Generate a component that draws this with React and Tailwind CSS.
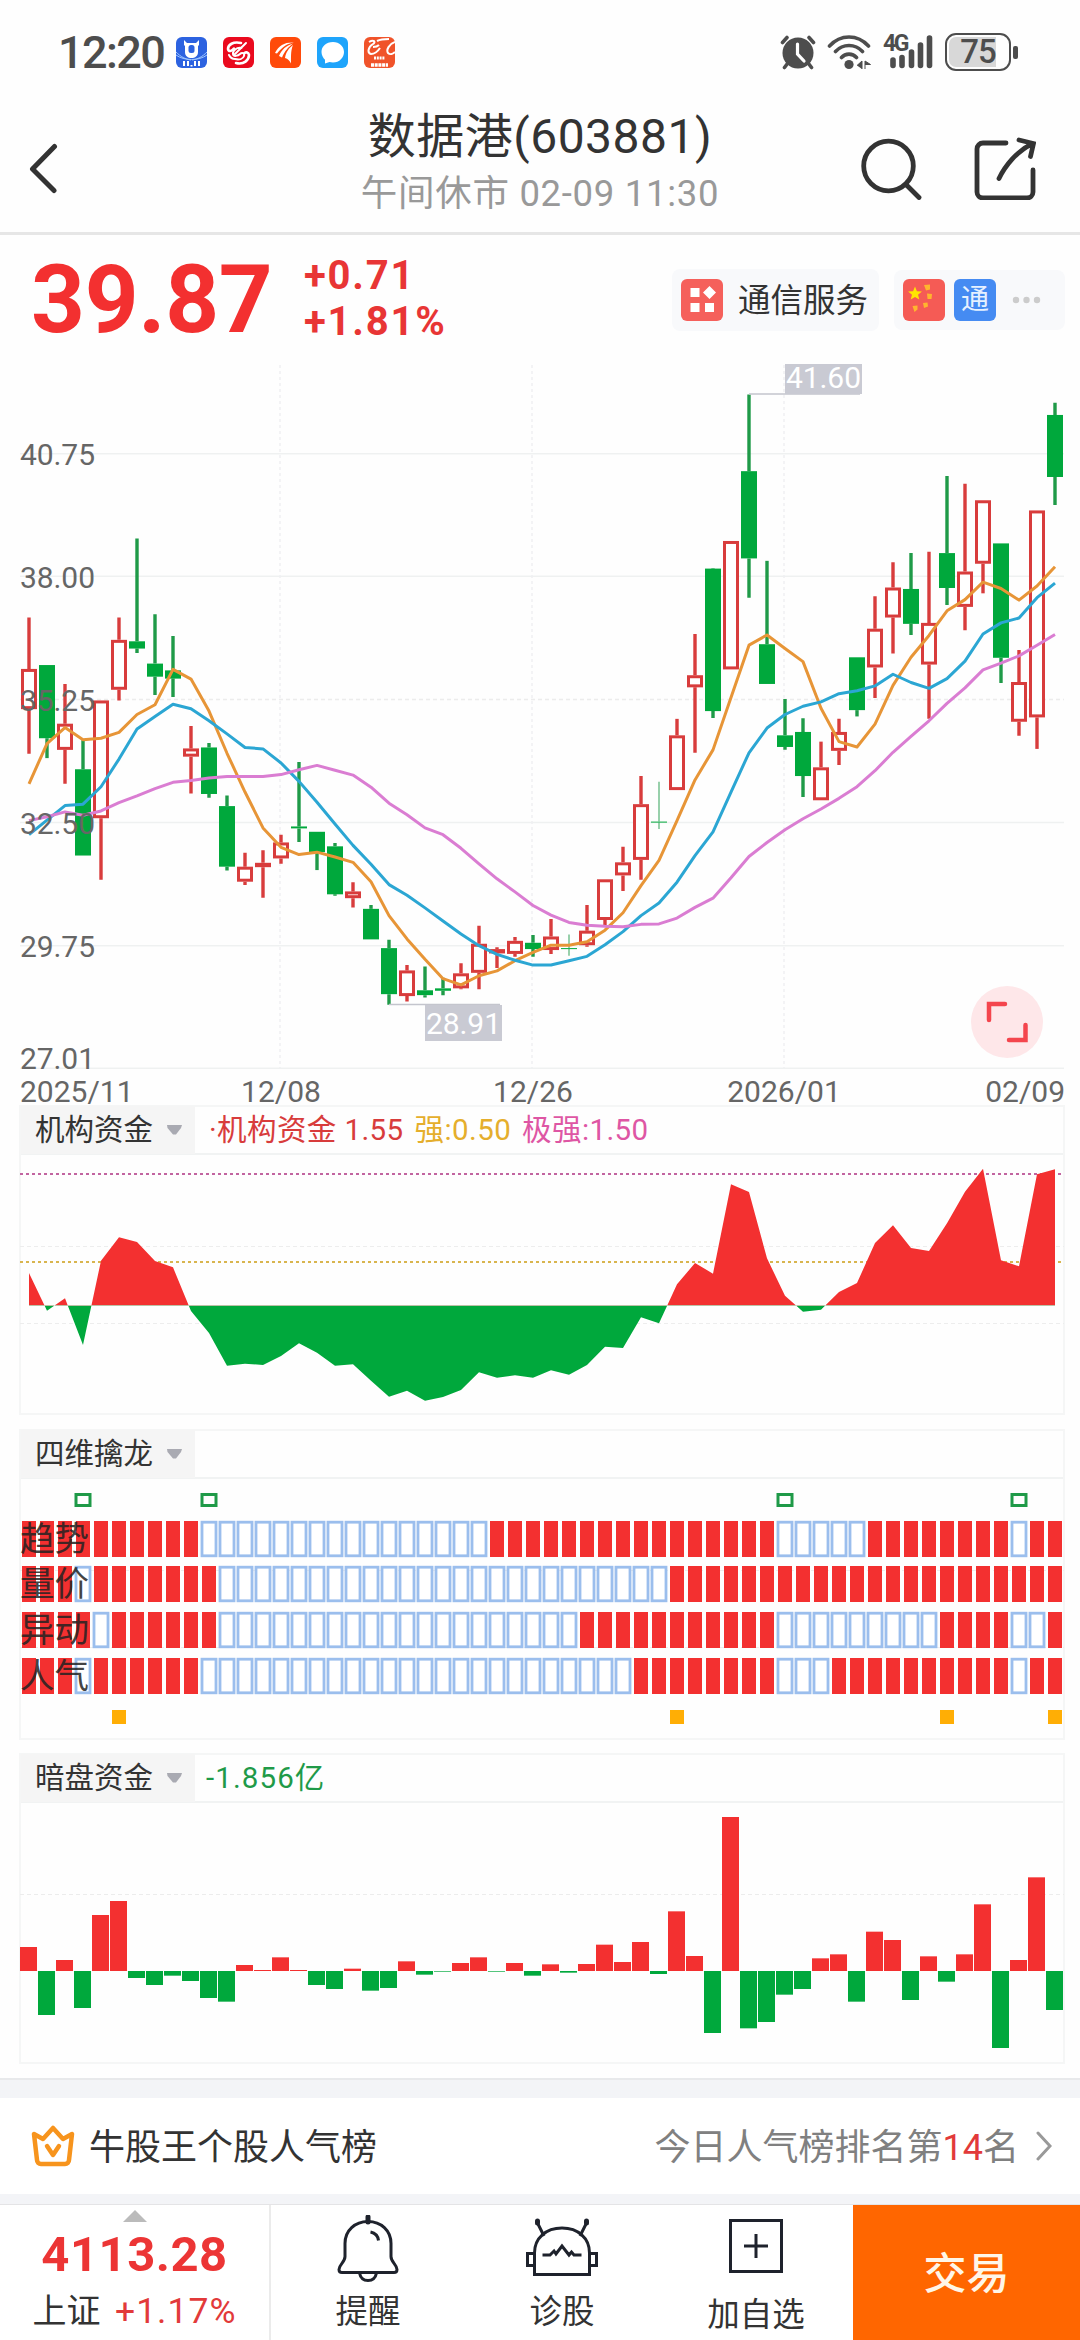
const RED = "#f33030";
const GREEN = "#00a83c";
const COUNT = 58;

// Every chart shares one time axis: a slot is 18px wide and the first is centred on 29
const cx = (i) => 29 + i * 18;

// Price samples sit on a 1568-step scale covering 760px, starting at y=350
const py = (v) => 350 + (v * 760) / 1568;

// [up, high, body top, body bottom, low]
const candles = [
  [1, 552, 658, 741, 833], [0, 650, 650, 801, 842], [1, 689, 771, 825, 895], [0, 805, 865, 1043, 1043],
  [1, 723, 723, 966, 1093], [1, 552, 598, 701, 723], [0, 389, 601, 616, 625], [0, 545, 647, 674, 712],
  [0, 590, 661, 678, 716], [1, 776, 822, 839, 915], [0, 811, 820, 916, 924], [0, 919, 941, 1066, 1074],
  [1, 1037, 1066, 1097, 1104], [1, 1032, 1058, 1067, 1130], [1, 1000, 1016, 1049, 1060], [0, 850, 983, 987, 1015],
  [0, 994, 994, 1036, 1073], [0, 1017, 1024, 1123, 1126], [1, 1098, 1117, 1131, 1150], [0, 1145, 1153, 1216, 1216],
  [0, 1217, 1234, 1329, 1351], [1, 1269, 1280, 1333, 1344], [0, 1272, 1321, 1331, 1336], [0, 1295, 1317, 1322, 1331],
  [1, 1265, 1286, 1317, 1319], [1, 1188, 1225, 1285, 1319], [1, 1232, 1236, 1245, 1275], [1, 1211, 1219, 1246, 1252],
  [0, 1207, 1223, 1236, 1252], [1, 1174, 1210, 1238, 1246], [0, 1206, 1234, 1236, 1250], [1, 1145, 1198, 1228, 1231],
  [1, 1092, 1092, 1176, 1188], [1, 1025, 1057, 1084, 1116], [1, 879, 937, 1052, 1093], [0, 891, 973, 975, 988],
  [1, 761, 795, 908, 908], [1, 586, 671, 696, 831], [0, 450, 451, 745, 759], [1, 394, 394, 659, 659],
  [0, 92, 250, 430, 511], [0, 435, 607, 689, 689], [0, 720, 795, 819, 825], [0, 760, 788, 879, 922],
  [1, 808, 861, 929, 929], [1, 761, 788, 827, 856], [0, 634, 634, 743, 756], [1, 508, 575, 655, 718],
  [1, 438, 490, 552, 626], [0, 419, 493, 565, 588], [1, 416, 563, 649, 761], [0, 260, 419, 491, 526],
  [1, 276, 457, 530, 578], [1, 310, 310, 441, 502], [0, 399, 399, 635, 687], [1, 619, 685, 767, 796],
  [1, 331, 331, 758, 823], [0, 109, 134, 262, 320],
];

const averages = [
  {
    color: "#e79537",
    points: [895, 812, 779, 804, 801, 789, 752, 732, 659, 679, 745, 832, 912, 986, 1026, 1041, 1036, 1046, 1057, 1097, 1167,
      1215, 1257, 1297, 1310, 1291, 1281, 1260, 1243, 1228, 1228, 1221, 1197, 1161, 1105, 1053, 971, 887, 825, 717, 609,
      588, 616, 643, 739, 808, 819, 772, 692, 634, 589, 538, 515, 479, 492, 516, 487, 447],
  },
  {
    color: "#2ba6d3",
    points: [1000, 970, 940, 937, 901, 844, 782, 756, 731, 740, 765, 792, 820, 823, 852, 890, 933, 978, 1022, 1061, 1103,
      1125, 1151, 1178, 1205, 1229, 1247, 1259, 1269, 1269, 1260, 1251, 1227, 1200, 1167, 1141, 1098, 1043, 994, 912, 831,
      780, 752, 735, 726, 709, 703, 693, 669, 686, 698, 678, 642, 586, 563, 553, 511, 481],
  },
  {
    color: "#da7dd2",
    points: [971, 963, 953, 960, 951, 934, 920, 905, 892, 888, 883, 880, 880, 880, 876, 866, 857, 867, 877, 902, 935,
      959, 986, 1000, 1028, 1060, 1091, 1118, 1146, 1166, 1181, 1187, 1189, 1190, 1185, 1184, 1172, 1150, 1131, 1089, 1045,
      1016, 990, 967, 947, 925, 901, 868, 830, 797, 765, 729, 697, 660, 646, 631, 609, 587],
  },
];

const priceLabels = [
  ["40.75", 465], ["38.00", 588], ["35.25", 710.5], ["32.50", 834], ["29.75", 957], ["27.01", 1069],
];

// thirds of a pixel below y=1080, zero line at 676
const funds = [579, 692, 655, 795, 542, 472, 486, 543, 562, 693, 759, 857, 851, 855, 828, 790, 818, 857, 853, 902, 950,
  932, 962, 951, 930, 877, 893, 886, 893, 871, 884, 855, 800, 804, 712, 730, 613, 549, 581, 313, 336, 535, 647, 695,
  689, 636, 609, 489, 436, 504, 513, 430, 335, 266, 541, 559, 283, 268];

// Hollow cell ranges for each signal row, the rest is filled
const signals = [
  { name: "趋势", y: 1521, hollow: [[10, 25], [42, 46], [55, 55]] },
  { name: "量价", y: 1566, hollow: [[3, 3], [11, 35]] },
  { name: "异动", y: 1612, hollow: [[4, 4], [11, 30], [42, 50], [55, 56]] },
  { name: "人气", y: 1658, hollow: [[3, 3], [10, 33], [42, 44], [55, 55]] },
];

const dark = [72, -132, 33, -111, 168, 210, -21, -42, -14, -30, -81, -92, 18, 3, 41, 3, -42, -54, 7, -59, -51, 29, -11,
  -2, 24, 41, -2, 24, -14, 20, -5, 21, 79, 27, 87, -9, 179, 45, -186, 462, -172, -153, -71, -54, 38, 50, -92, 118, 93,
  -87, 44, -32, 50, 200, -231, 33, 281, -117];

function StatusBar() {
  return (
    <div className="h-[104px] flex items-center justify-between pl-[58px] pr-[62px]">
      <div className="flex items-center">
        <span className="w-[118px] text-[45px] font-medium tracking-[-1.600px] leading-none text-[#4d4d4d]">12:20</span>
        <div className="flex gap-4">
          <svg width="31" height="31" viewBox="0 0 31 31">
            <rect width="31" height="31" rx="6" fill="#2c62e0" />
            <path d="M0 18c8 6 23 6 31 0M0 15c5 5 9 7 15 8M31 15c-5 5-9 7-15 8" stroke="#9fc6ff" strokeWidth="1" fill="none" />
            <path d="M8 3l3 3h9l3-3v5l-1 1v6c0 4-3 6-6.500 6S9 19 9 15V9L8 8z" fill="#fff" />
            <rect x="12.500" y="8" width="6" height="8" rx="2.500" fill="#2c62e0" />
            <path d="M8 24v5M12 24v5M19 24v5M23 24v5M15.500 28v1.500" stroke="#fff" strokeWidth="2" />
          </svg>
          <svg width="31" height="31" viewBox="0 0 31 31">
            <rect width="31" height="31" rx="6" fill="#ea0a1e" />
            <path d="M18 6C10 4 5 8 5 12c.5 3 4 2.500 6-.5M13 26C21 28 26 23 26 18c-.5-3-3-3-4.500-2" stroke="#fff" strokeWidth="2.600" fill="none" strokeLinecap="round" />
            <path d="M23 6L12 17M18.500 11c-5-1-9 3-8.500 6s5 2 7 0 5-1 4 2-5 4-9 3c-3 0-5-2-6-4" stroke="#fff" strokeWidth="2" fill="none" strokeLinecap="round" />
          </svg>
          <svg width="31" height="31" viewBox="0 0 31 31">
            <rect width="31" height="31" rx="6" fill="#ff4a0a" />
            <path d="M5 16C9 8 15 5 24 5.500c-7 1-11 4-17 11zM9 19c3-7 7-10 14-12.500-5 4-8 7-11 14zM15 21c1-6 4-10 8-13-2 5-2 9-2 18.500-1.500-3-3-4.500-6-5.500z" fill="#fff" />
          </svg>
          <svg width="31" height="31" viewBox="0 0 31 31">
            <rect width="31" height="31" rx="6" fill="#1ea4fb" />
            <path d="M16 5c6.500 0 11 4.500 11 10s-4.500 10.500-11 10.500c-1.500 0-2.500-.2-3.500-.5L8 26.500v-3.800C6 21 4.500 18 4.500 15 4.500 9.500 9 5 16 5z" fill="#fff" />
          </svg>
          <svg width="31" height="31" viewBox="0 0 31 31">
            <rect width="31" height="31" rx="6" fill="#f0532a" />
            <path d="M5 5c5-3 7 0 4 2-5 3-6 9-2 10 4 0 7-3 9-6M13 4c4-2 8-2 12-2M31 5c-6 2-9 8-7 11 2 2 5 1 7-1M9 10c3 0 5-1 6-2" stroke="#fff" strokeWidth="2" fill="none" />
            <path d="M10 21h11" stroke="#fff" strokeWidth="3" strokeDasharray="2 .8" />
            <path d="M7 28h17" stroke="#fff" strokeWidth="3.500" strokeDasharray="3 .7" />
          </svg>
        </div>
      </div>

      <div className="flex items-center text-[#4d4d4d]">
        <svg width="36" height="36" viewBox="0 0 36 36" className="mr-[11px]" fill="none" stroke="#4d4d4d">
          <circle cx="18" cy="19" r="15.500" fill="#4d4d4d" stroke="none" />
          <path d="M2.500 8.500l4.500-5M33.500 8.500l-4.500-5" strokeWidth="3.600" strokeLinecap="round" />
          <path d="M7.500 29.500l-3 4M28.500 29.500l3 4" strokeWidth="3.600" strokeLinecap="round" />
          <path d="M17.500 10v10l6.500 7" stroke="#fff" strokeWidth="3.200" strokeLinecap="round" />
        </svg>
        <svg width="44" height="36" viewBox="0 0 44 36" className="mr-[12px]" fill="none" stroke="#4d4d4d">
          <path d="M2.500 12C13.500 0 30.500 0 41.500 12M8.500 17.500c7.500-8 19.500-8 27 0M14.500 23.500c4-4.500 11-4.500 15 0" strokeWidth="3.600" strokeLinecap="round" />
          <circle cx="22" cy="30.500" r="4.600" fill="#4d4d4d" stroke="none" />
          <path d="M30 31.500l5-4.500v8M38 35v-8l5.500 3.500H38" fill="#4d4d4d" stroke="#4d4d4d" strokeWidth="1" />
        </svg>
        <div className="relative w-[51px] h-9 mr-[11px]">
          <span className="absolute left-0 -top-[1px] text-[23px] leading-[22px] font-bold tracking-[-2.500px]">4G</span>
          <svg width="51" height="36" viewBox="0 0 51 36" fill="none" stroke="#4d4d4d" strokeWidth="5.600" strokeLinecap="round">
            <path d="M10 26v5.500M19 23.500v8M28.500 18v13.500M37.500 11v20.500M46.500 4v27.500" />
          </svg>
        </div>
        <div className="relative w-[66px] h-[38px] rounded-[11px] border-[2.500px] border-[#4d4d4d] p-[2px]">
          <div className="w-[47px] h-full rounded-l-[7px] bg-[#d8d8d8]" />
          <span className="absolute inset-0 text-center text-[33px] leading-[34px] font-medium tracking-[-1px]">75</span>
        </div>
        <div className="w-[5px] h-[13px] ml-[2px] rounded-[2px] bg-[#4d4d4d]" />
      </div>
    </div>
  );
}

function Header() {
  return (
    <div className="h-[131px] border-b-[3px] border-[#e6e6e6] flex items-center justify-between">
      <div className="w-[220px] pl-[28px]">
        <svg width="32" height="52" viewBox="0 0 32 52" fill="none" stroke="#333" strokeWidth="5" strokeLinecap="round" strokeLinejoin="round">
          <path d="M26.500 4.500L4.500 27l21.500 21.500" />
        </svg>
      </div>
      <div className="h-full pt-[3px] text-center">
        <div className="text-[48px] leading-[60px] tracking-[0.500px] text-[#333]">数据港(603881)</div>
        <div className="text-[36.500px] leading-[54px] tracking-[0.700px] text-[#999]">午间休市 02-09 11:30</div>
      </div>
      <div className="w-[220px] pr-[44px] flex justify-end gap-[50px]">
        <svg width="62" height="64" viewBox="0 0 62 64" fill="none" stroke="#333" strokeWidth="4.800" strokeLinecap="round">
          <circle cx="28.500" cy="30" r="24.800" />
          <path d="M47 49.500l12 12" />
        </svg>
        <svg width="64" height="64" viewBox="0 0 64 64" fill="none" stroke="#333" strokeWidth="4.800" strokeLinecap="round">
          <path d="M34 7H11a6 6 0 0 0-6 6v43a6 6 0 0 0 6 6h44a6 6 0 0 0 6-6V34" />
          <path d="M27 42.500C33 30 45 15 60 8M47 4l14.500 3.500L58.500 20.500" />
        </svg>
      </div>
    </div>
  );
}

function Quote() {
  return (
    <div className="h-[130px] flex items-center pl-[31px] pr-[15px]">
      <div className="w-[273px] text-[94px] leading-none font-bold tracking-[-0.300px] text-[#f33030]">39.87</div>
      <div className="text-[40px] leading-[46px] font-bold tracking-[1.800px] text-[#e83535] -mt-[2px]">
        <div>+0.71</div>
        <div>+1.81%</div>
      </div>
      <div className="ml-auto h-[62px] w-[207px] rounded-lg bg-[#f8f9fb] flex items-center pl-[9px]">
        <svg width="42" height="42" viewBox="0 0 42 42" className="mr-[15px]">
          <rect width="42" height="42" rx="6" fill="#f5605b" />
          <path d="M9.500 9h9v9h-9zM9.500 24h9v9h-9zM24 24h9v9h-9zM28.500 7l6.500 6.500-6.500 6.500-6.500-6.500z" fill="#fff" />
        </svg>
        <span className="pt-[3px] text-[32.500px] text-[#333]">通信服务</span>
      </div>
      <div className="ml-[15px] h-[60px] w-[171px] rounded-lg bg-[#f8f9fb] flex items-center gap-[9px] pl-[9px]">
        <svg width="42" height="42" viewBox="0 0 42 42" fill="#ffe600">
          <rect width="42" height="42" rx="6" fill="#f55b55" />
          <path d="M12 7.500l1.900 4.700 5 .3-3.900 3.200 1.300 4.900-4.300-2.700-4.300 2.700L9 15.700l-3.900-3.200 5-.3z" />
          <g fill="#ffb52e">
            <path d="M21 6l6-.5v5l-4 1zM24 14.500l5 .5-.5 5h-4zM20 24l4.500-.5.500 4-4 1.500zM9.500 27l5-.5v4l-3 2.500z" />
          </g>
        </svg>
        <div className="w-[42px] h-[42px] rounded-md bg-[#458bf2] text-[#e6f1ff] text-[28px] leading-[42px] text-center">通</div>
        <svg width="30" height="8" viewBox="0 0 30 8" fill="#ccc" className="ml-[7px]">
          <circle cx="4" cy="4" r="3.200" />
          <circle cx="14.500" cy="4" r="3.200" />
          <circle cx="25" cy="4" r="3.200" />
        </svg>
      </div>
    </div>
  );
}

function PriceChart() {
  return (
    <svg width="1080" height="740" viewBox="0 365 1080 740" className="block overflow-visible">
      {[453.7, 576.3, 822.6, 945.7, 1068.3].map((y) => (
        <line key={y} x1="20" x2="1064" y1={y} y2={y} stroke="#eff1f1" strokeWidth="1.500" />
      ))}
      <line x1="20" x2="1064" y1="699.500" y2="699.500" stroke="#ececec" strokeWidth="1.500" strokeDasharray="4 3" />
      {[280, 532, 784].map((x) => (
        <line key={x} x1={x} x2={x} y1="365" y2="1068" stroke="#f0f0f2" strokeWidth="1.500" strokeDasharray="3 3" />
      ))}

      {candles.map(([up, high, top, bottom, low], i) => {
        const x = cx(i);
        const color = up ? "#d83c3c" : "#1f9a48";
        const y1 = py(top);
        const h = py(bottom) - y1;
        const thin = i === 30 || i === 35;
        return (
          <g key={i}>
            <path d={`M${x} ${py(high)}V${y1}M${x} ${y1 + h}V${py(low)}`} stroke={color} strokeWidth={thin ? 1.5 : 3.4} opacity={thin ? 0.6 : 1} />
            {up ? (
              <rect x={x - 6.5} y={y1 + 1.5} width="13" height={Math.max(h - 3, 0.6)} fill="#fff" stroke={color} strokeWidth="3" />
            ) : (
              <rect x={x - 8} y={y1} width="16" height={Math.max(h, 1)} fill={GREEN} />
            )}
          </g>
        );
      })}

      {averages.map((a) => (
        <polyline key={a.color} points={a.points.map((v, i) => `${cx(i)},${py(v)}`).join(" ")} fill="none" stroke={a.color} strokeWidth="3" strokeLinejoin="round" />
      ))}

      <path d="M749 394H860M389 1004.500H500" stroke="#c4c5cd" strokeWidth="1.500" />
      <rect x="785" y="364" width="77" height="30" fill="#c9cad3" />
      <rect x="425" y="1005" width="77" height="36" fill="#c9cad3" />
      <g fill="#fff" fontSize="30">
        <text x="786" y="388" textLength="75">41.60</text>
        <text x="426" y="1034" textLength="75">28.91</text>
      </g>

      <g fill="#666" fontSize="30">
        {priceLabels.map(([label, y]) => (
          <text key={label} x="20" y={y} textLength="75">{label}</text>
        ))}
        <text x="20" y="1101.500">2025/11</text>
        <text x="281" y="1101.500" textAnchor="middle">12/08</text>
        <text x="533" y="1101.500" textAnchor="middle">12/26</text>
        <text x="784" y="1101.500" textAnchor="middle">2026/01</text>
        <text x="1065" y="1101.500" textAnchor="end">02/09</text>
      </g>

      <circle cx="1007" cy="1022" r="36" fill="#fee7e9" />
      <path d="M1005 1004H989V1020M1009 1040H1025.500V1025" fill="none" stroke="#f4454d" strokeWidth="4.500" strokeLinecap="round" />
    </svg>
  );
}

function Panel({ title, legend, className, children }) {
  return (
    <section className={`ml-[19px] w-[1046px] border-2 border-[#f5f6f6] ${className}`}>
      <div className="h-[48px] border-b-2 border-[#f1f3f3] flex items-center text-[29.500px]">
        <div className="h-[48px] w-[174px] shrink-0 bg-[#f5f5f5] flex items-center justify-between pl-[14px] pr-[12px] text-[#333]">
          {title}
          <svg width="17" height="10" viewBox="0 0 17 10">
            <path d="M1 0h15l-1 3-5 6.500H7L1.500 3z" fill="#a9aab2" />
          </svg>
        </div>
        {legend}
      </div>
      {children}
    </section>
  );
}

function FundsChart() {
  const base = 1305.4;
  const line = funds.map((v, i) => `L${cx(i)} ${1080 + v / 3}`).join("");
  const area = `M29 ${base}${line}L${cx(COUNT - 1)} ${base}Z`;
  return (
    <svg width="1042" height="258" viewBox="21 1155 1042 258" className="block overflow-visible">
      <clipPath id="above"><rect x="0" y="1150" width="1080" height={base - 1150} /></clipPath>
      <clipPath id="below"><rect x="0" y={base} width="1080" height="120" /></clipPath>
      <path d="M20 1246.500H1064M20 1323.500H1064" stroke="#ededed" strokeWidth="1" strokeDasharray="4 3" />
      <path d="M20 1174H1064" stroke="#c264a0" strokeWidth="2" strokeDasharray="3 3" />
      <path d="M20 1262H1064" stroke="#d9b54e" strokeWidth="2" strokeDasharray="3 3" />
      <path d={area} fill={RED} clipPath="url(#above)" />
      <path d={area} fill={GREEN} clipPath="url(#below)" />
    </svg>
  );
}

function SignalChart() {
  return (
    <svg width="1042" height="259" viewBox="21 1479 1042 259" className="block overflow-visible">
      <path d="M20 1570.500H1064M20 1647.500H1064" stroke="#ededed" strokeWidth="1" strokeDasharray="4 3" />
      {[3, 10, 42, 55].map((i) => (
        <rect key={i} x={cx(i) - 7} y="1494.500" width="14" height="11" fill="#fff" stroke="#1f9a48" strokeWidth="3" />
      ))}
      {signals.map((row) => (
        <g key={row.name}>
          {Array.from({ length: COUNT }, (_, i) =>
            row.hollow.some(([a, b]) => i >= a && i <= b) ? (
              <rect key={i} x={cx(i) - 7} y={row.y + 1.2} width="14" height="33.600" fill="#fff" stroke="#9bbeed" strokeWidth="2.800" />
            ) : (
              <rect key={i} x={cx(i) - 7} y={row.y} width="14" height="36" fill={RED} />
            )
          )}
          <text x="20" y={row.y + 30} fontSize="34.500" fill="#222" fillOpacity="0.850">{row.name}</text>
        </g>
      ))}
      {[5, 36, 51, 57].map((i) => (
        <rect key={i} x={cx(i) - 7} y="1710" width="14" height="14" fill="#ffae05" />
      ))}
    </svg>
  );
}

function DarkPoolChart() {
  return (
    <svg width="1042" height="259" viewBox="21 1803 1042 259" className="block overflow-visible">
      <path d="M20 1894.500H1064" stroke="#ececec" strokeWidth="1" strokeDasharray="4 3" />
      {dark.map((v, i) => (
        <rect key={i} x={cx(i) - 9} y={v > 0 ? 1971 - v / 3 : 1971} width="17" height={Math.abs(v) / 3} fill={v > 0 ? RED : GREEN} />
      ))}
    </svg>
  );
}

function RankRow() {
  return (
    <div className="h-[96px] bg-white flex items-center pl-[30px] pr-[28px]">
      <svg width="46" height="42" viewBox="0 0 46 42" fill="none" stroke="#f7941d" strokeWidth="4.500" strokeLinejoin="round">
        <path d="M4 9l9 5 10-11 10 11 9-5-3 26a4 4 0 0 1-4 4H11a4 4 0 0 1-4-4z" />
        <path d="M17 21l6 9 6-9" strokeLinecap="round" />
      </svg>
      <span className="ml-[13px] pt-[3px] text-[36px] text-[#333]">牛股王个股人气榜</span>
      <span className="ml-auto pt-[3px] text-[36px] text-[#808080]">
        今日人气榜排名第<span className="text-[#e23a3a]">14</span>名
      </span>
      <svg width="16" height="30" viewBox="0 0 16 30" className="ml-[17px]" fill="none" stroke="#999" strokeWidth="3" strokeLinecap="round">
        <path d="M2 2l12 13L2 28" />
      </svg>
    </div>
  );
}

function BottomItem({ label, className, children }) {
  return (
    <div className={`flex flex-col items-center ${className}`}>
      <div className="h-[85px] pt-[10px]">{children}</div>
      <span className="text-[32.500px] leading-[44px] text-[#333]">{label}</span>
    </div>
  );
}

function BottomBar() {
  return (
    <div className="h-[136px] border-t border-[#e4e4e6] bg-white flex">
      <div className="w-[271px] border-r-2 border-[#ebebeb] flex flex-col items-center pt-[5px]">
        <svg width="24" height="12" viewBox="0 0 24 12">
          <path d="M12 0l12 12H0z" fill="#bbb" />
        </svg>
        <span className="mt-[8px] text-[49px] leading-[50px] font-bold tracking-[0.500px] text-[#ec3535]">4113.28</span>
        <span className="mt-[9px] text-[34px] leading-[44px] text-[#333]">
          上证 <span className="ml-[6px] text-[35.500px] tracking-[1px] text-[#e23a3a]">+1.17%</span>
        </span>
      </div>
      <BottomItem label="提醒" className="w-[194px]">
        <svg width="64" height="68" viewBox="0 0 64 68" fill="none" stroke="#1e222c" strokeWidth="3">
          <path d="M32 2v5" strokeWidth="5" strokeLinecap="round" />
          <path d="M32 6.500c-13 0-23 9-23 22v13c0 6-6 8-6 13 0 2 1 3 3 3h52c2 0 3-1 3-3 0-5-6-7-6-13v-13c0-13-10-22-23-22z" />
          <path d="M23.500 58c1 5 4 7.500 8.500 7.500s7.500-2.500 8.500-7.500M34.500 17c5 1 7.500 4 8 8.500" />
        </svg>
      </BottomItem>
      <BottomItem label="诊股" className="w-[194px]">
        <svg width="76" height="66" viewBox="0 0 76 66" fill="none" stroke="#1e222c" strokeWidth="3">
          <path d="M14 9l6 12M62 9l-6 12" />
          <path d="M13.500 6v2M62.500 6v2" strokeWidth="5" strokeLinecap="round" />
          <path d="M10.500 59.500V38C10.500 23 22 13 38 13s27.500 10 27.500 25v21.500z" />
          <path d="M10.500 38.500H3.500v12h7M65.500 38.500h7v12h-7M18.500 40H26l4-4 2 3 6-8 7 9 2.500-3 2.500 3h7.500" />
        </svg>
      </BottomItem>
      <BottomItem label="加自选" className="w-[194px] pt-[3px]">
        <svg width="56" height="56" viewBox="0 0 56 56" fill="none" stroke="#1e222c" strokeWidth="3">
          <path d="M2.500 2.500h51v51h-51zM16 28h24M28 16v24" />
        </svg>
      </BottomItem>
      <div className="flex-1 bg-[#ff6600] pt-[3px] text-[#fff6e8] text-[43px] font-medium flex items-center justify-center">交易</div>
    </div>
  );
}

export default function App() {
  return (
    <div className="w-[1080px] h-[2340px] overflow-hidden bg-[#fefefe] font-['Roboto','Noto_Sans_CJK_SC',sans-serif]">
      <StatusBar />
      <Header />
      <Quote />
      <PriceChart />

      <Panel
        title="机构资金"
        className="h-[310px]"
        legend={
          <div className="pl-[14px] flex gap-[11px] tracking-[0.400px]">
            <span className="text-[#d83c3c]">·机构资金 1.55</span>
            <span className="text-[#e5ae2c]">强:0.50</span>
            <span className="text-[#de56a4]">极强:1.50</span>
          </div>
        }
      >
        <FundsChart />
      </Panel>
      <Panel title="四维擒龙" className="mt-[14px] h-[311px]">
        <SignalChart />
      </Panel>
      <Panel
        title="暗盘资金"
        className="mt-[13px] h-[311px]"
        legend={<span className="pl-[11px] tracking-[1.100px] text-[#1f9a48]">-1.856亿</span>}
      >
        <DarkPoolChart />
      </Panel>

      <div className="mt-[14px] border-t-2 border-[#e8e9eb] bg-[#f3f4f7] pt-[18px] pb-[10px]">
        <RankRow />
      </div>
      <BottomBar />
    </div>
  );
}
